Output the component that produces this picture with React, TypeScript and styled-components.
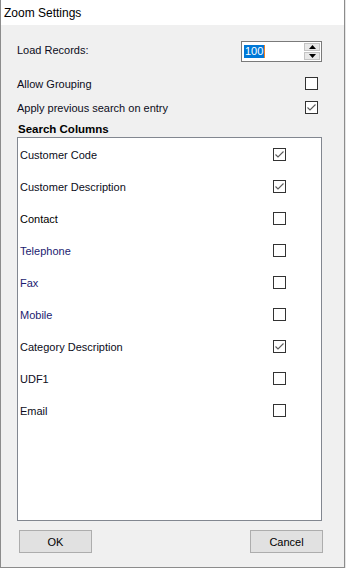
import * as React from 'react';
import styled, { createGlobalStyle } from 'styled-components';

const GlobalStyle = createGlobalStyle`
  html, body {
    margin: 0;
    padding: 0;
    background: #e6e6e6;
  }
  body {
    font-family: 'Liberation Sans', Arial, sans-serif;
    font-size: 11px;
    color: #000;
  }
`;

const Window = styled.div`
  width: 345px;
  height: 568px;
  box-sizing: border-box;
  border: 1px solid #8c8c8c;
  border-top: none;
  background: #f0f0f0;
  display: flex;
  flex-direction: column;
`;

const TitleBar = styled.div`
  height: 25px;
  background: #fff;
  display: flex;
  align-items: center;
  padding-left: 3px;
  font-size: 12px;
  color: #000;
`;

const Body = styled.div`
  flex: 1;
  display: flex;
  flex-direction: column;
  padding: 16px 22px 0 16px;
`;

const FieldRow = styled.div<{ $height: number; $top: number }>`
  display: flex;
  align-items: center;
  justify-content: space-between;
  height: ${(p) => p.$height}px;
  margin-top: ${(p) => p.$top}px;
`;

const Label = styled.span<{ $color?: string; $raise?: boolean }>`
  color: ${(p) => p.$color ?? '#0c0c20'};
  white-space: nowrap;
  padding-top: ${(p) => (p.$raise ? 0 : 2)}px;
  margin-bottom: ${(p) => (p.$raise ? 4 : 0)}px;
`;

const SpinBox = styled.div`
  width: 81px;
  height: 21px;
  box-sizing: border-box;
  border: 1px solid #7a7a7a;
  background: #fff;
  display: flex;
  align-items: center;
  padding: 0 1px 0 2px;
`;

const SpinInput = styled.div`
  flex: 1;
  display: flex;
  align-items: center;
`;

const Selected = styled.span`
  background: #0078d7;
  color: #fff;
  height: 13px;
  line-height: 13px;
  padding: 0 1px;
  border-right: 1px solid #f08020;
`;

const SpinButtons = styled.div`
  display: flex;
  flex-direction: column;
  gap: 1px;
  width: 16px;
`;

const SpinButton = styled.div`
  height: 8px;
  box-sizing: border-box;
  border: 1px solid #c4c4c4;
  background: #e8e8e8;
  display: flex;
  align-items: center;
  justify-content: center;
`;

const CheckWrap = styled.div<{ $right?: number }>`
  width: 13px;
  height: 13px;
  box-sizing: border-box;
  border: 1px solid #333;
  background: #fff;
  margin-right: ${(p) => p.$right ?? 0}px;
  display: flex;
`;

const SectionTitle = styled.div`
  font-weight: bold;
  font-size: 11.5px;
  height: 14px;
  line-height: 14px;
  margin-top: 2px;
  padding-top: 1px;
  margin-left: 1px;
`;

const ListBox = styled.div`
  margin-top: 1px;
  height: 384px;
  box-sizing: border-box;
  border: 1px solid #828790;
  background: #fff;
  padding: 0 0 0 2px;
  display: flex;
  flex-direction: column;
`;

const ListRow = styled.div`
  height: 32px;
  display: flex;
  align-items: center;
  justify-content: space-between;
  padding-right: 35px;
`;

const ButtonRow = styled.div`
  margin-top: 9px;
  display: flex;
  justify-content: space-between;
  padding-left: 2px;
  margin-right: -1px;
`;

const PushButton = styled.div`
  width: 73px;
  height: 23px;
  box-sizing: border-box;
  border: 1px solid #adadad;
  background: #e1e1e1;
  display: flex;
  align-items: center;
  justify-content: center;
  padding-top: 1px;
  color: #000;
`;

const Check = ({ checked, right }: { checked: boolean; right?: number }) => (
  <CheckWrap $right={right}>
    {checked && (
      <svg width="11" height="11" viewBox="0 0 11 11">
        <polyline points="1.5,5.5 4,8 9.5,2.5" fill="none" stroke="#5a5a5a" strokeWidth="1.1" />
      </svg>
    )}
  </CheckWrap>
);

const Arrow = ({ up }: { up: boolean }) => (
  <svg width="7" height="4" viewBox="0 0 7 4">
    <polygon points={up ? '3.5,0 7,4 0,4' : '0,0 7,0 3.5,4'} fill="#000" />
  </svg>
);

const columns = [
  { name: 'Customer Code', checked: true },
  { name: 'Customer Description', checked: true },
  { name: 'Contact', checked: false, color: '#000' },
  { name: 'Telephone', checked: false, color: '#1c1c70' },
  { name: 'Fax', checked: false, color: '#1c1c70' },
  { name: 'Mobile', checked: false, color: '#1c1c70' },
  { name: 'Category Description', checked: true },
  { name: 'UDF1', checked: false },
  { name: 'Email', checked: false },
];

const App: React.FC = () => {
  return (
    <>
      <GlobalStyle />
      <Window>
        <TitleBar>Zoom Settings</TitleBar>
        <Body>
          <FieldRow $height={21} $top={0}>
            <Label $raise>Load Records:</Label>
            <SpinBox>
              <SpinInput>
                <Selected>100</Selected>
              </SpinInput>
              <SpinButtons>
                <SpinButton>
                  <Arrow up />
                </SpinButton>
                <SpinButton>
                  <Arrow up={false} />
                </SpinButton>
              </SpinButtons>
            </SpinBox>
          </FieldRow>
          <FieldRow $height={24} $top={9}>
            <Label>Allow Grouping</Label>
            <Check checked={false} right={4} />
          </FieldRow>
          <FieldRow $height={24} $top={0}>
            <Label>Apply previous search on entry</Label>
            <Check checked right={4} />
          </FieldRow>
          <SectionTitle>Search Columns</SectionTitle>
          <ListBox>
            {columns.map((c) => (
              <ListRow key={c.name}>
                <Label $color={c.color}>{c.name}</Label>
                <Check checked={c.checked} />
              </ListRow>
            ))}
          </ListBox>
          <ButtonRow>
            <PushButton>OK</PushButton>
            <PushButton>Cancel</PushButton>
          </ButtonRow>
        </Body>
      </Window>
    </>
  );
};

export default App;
